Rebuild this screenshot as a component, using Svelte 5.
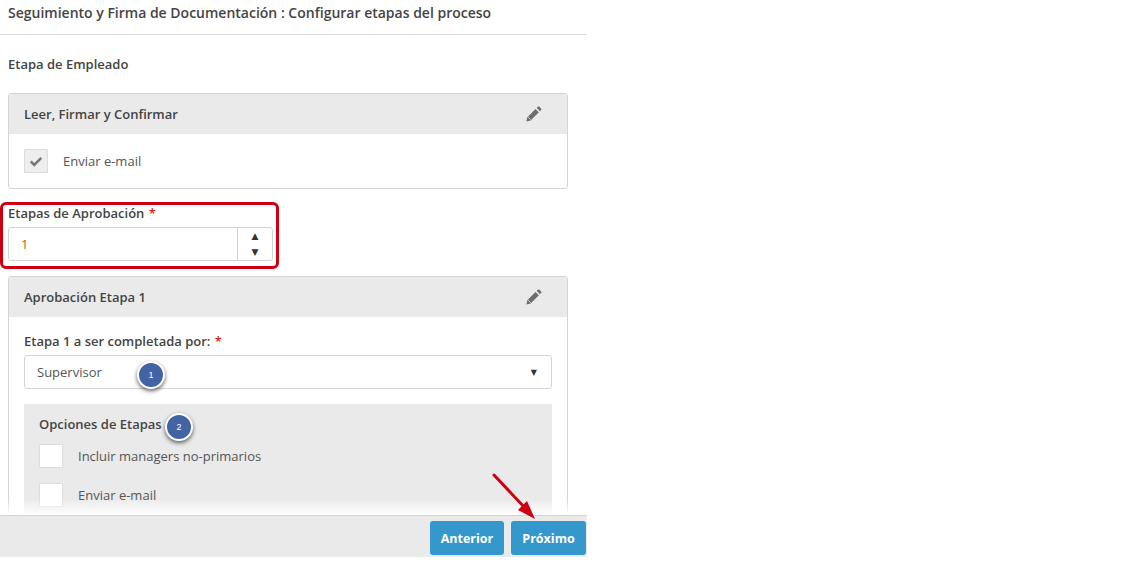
<script lang="ts">
  const pencil = "M4 21 L5.2 15.8 L15 6 L19 10 L9.2 19.8 Z M16.4 4.6 L17.7 3.3 C18.3 2.7 19.1 2.7 19.7 3.3 L21.7 5.3 C22.3 5.9 22.3 6.7 21.7 7.3 L20.4 8.6 Z";
</script>

<div class="wizard">
  <div class="title">Seguimiento y Firma de Documentación : Configurar etapas del proceso</div>

  <div class="content">
    <h4>Etapa de Empleado</h4>

    <section class="panel">
      <header>
        <span>Leer, Firmar y Confirmar</span>
        <svg viewBox="0 0 24 24" width="20" height="20"><path d={pencil} fill="#6e6e6e" /><path d="M6.2 15.8 L9.2 18.8" stroke="#eaeaea" stroke-width="1" /></svg>
      </header>
      <div class="panel-body first">
        <div class="check-row">
          <span class="check disabled">
            <svg viewBox="0 0 16 16" width="14" height="14"><path d="M2 8.5 L6 12.5 L14 4.5" fill="none" stroke="#777" stroke-width="3" /></svg>
          </span>
          <span>Enviar e-mail</span>
        </div>
      </div>
    </section>

    <div class="field steps">
      <label for="steps">Etapas de Aprobación <em>*</em></label>
      <div class="spinner">
        <input id="steps" value="1" />
        <div class="arrows"><span>▲</span><span>▼</span></div>
      </div>
    </div>

    <section class="panel">
      <header>
        <span>Aprobación Etapa 1</span>
        <svg viewBox="0 0 24 24" width="20" height="20"><path d={pencil} fill="#6e6e6e" /><path d="M6.2 15.8 L9.2 18.8" stroke="#eaeaea" stroke-width="1" /></svg>
      </header>
      <div class="panel-body">
        <div class="field">
          <label for="who">Etapa 1 a ser completada por: <em>*</em></label>
          <div class="select" id="who">
            <span>Supervisor</span>
            <span class="caret">▼</span>
          </div>
        </div>
        <div class="options">
          <div class="options-title">Opciones de Etapas</div>
          <div class="check-row"><span class="check"></span><span>Incluir managers no-primarios</span></div>
          <div class="check-row"><span class="check"></span><span>Enviar e-mail</span></div>
        </div>
      </div>
    </section>
    <div class="fade"></div>
  </div>

  <footer>
    <button>Anterior</button>
    <button>Próximo</button>
  </footer>

  <!-- annotations painted on top of the screenshot -->
  <div class="highlight"></div>
  <div class="badge one">1</div>
  <div class="badge two">2</div>
  <svg class="arrow" width="60" height="60" viewBox="0 0 60 60">
    <path d="M3 3 L34 36" stroke="#cc0011" stroke-width="3" stroke-linecap="round" />
    <path d="M44 47 L27 38 L36 29 Z" fill="#cc0011" />
  </svg>
</div>

<style>
  :global(body) {
    background: #fff;
  }

  .wizard {
    position: relative;
    width: 587px;
    height: 557px;
    display: flex;
    flex-direction: column;
    overflow: hidden;
    font-family: "Open Sans", sans-serif;
    font-size: 13px;
    color: #444;
  }

  .title {
    flex: none;
    height: 29px;
    padding: 5px 8px 0;
    border-bottom: 1px solid #ddd;
    font-size: 14px;
    line-height: 16px;
    font-weight: 600;
    color: #444;
  }

  .content {
    position: relative;
    flex: 1;
    min-height: 0;
    overflow: hidden;
    padding: 0 19px 0 8px;
  }

  h4 {
    margin: 21px 0 0;
    font-size: 13px;
    line-height: 16px;
    font-weight: 600;
    color: #444;
  }

  .panel {
    margin-top: 21px;
    border: 1px solid #d4d4d4;
    border-radius: 3px;
  }

  .panel header {
    display: flex;
    align-items: center;
    justify-content: space-between;
    height: 40px;
    padding: 0 24px 0 15px;
    background: #eaeaea;
    font-size: 13px;
    font-weight: 600;
  }

  .panel-body {
    padding: 15px 15px 0;
    height: 400px;
  }

  .panel-body.first {
    height: 39px;
  }

  .check-row {
    display: flex;
    align-items: center;
    gap: 15px;
    height: 24px;
    font-size: 13px;
    color: #555;
  }

  .check {
    display: flex;
    align-items: center;
    justify-content: center;
    width: 24px;
    height: 24px;
    box-sizing: border-box;
    background: #fff;
    border: 1px solid #ddd;
    border-radius: 1px;
  }

  .check.disabled {
    background: #eee;
  }

  .field label {
    display: block;
    font-size: 13px;
    line-height: 16px;
    font-weight: 600;
    color: #444;
  }

  .panel-body .field label {
    padding-top: 1px;
  }

  em {
    font-style: normal;
    margin-left: 1px;
    color: #e02020;
  }

  .steps {
    margin-top: 16px;
    width: 265px;
  }

  .steps + .panel {
    margin-top: 15px;
  }

  .spinner {
    display: flex;
    height: 34px;
    margin-top: 6px;
    box-sizing: border-box;
    border: 1px solid #d4d4d4;
    border-radius: 3px;
  }

  .spinner input {
    flex: 1;
    min-width: 0;
    padding: 0 12px;
    border: 0;
    background: transparent;
    font: inherit;
    font-size: 13px;
    color: #a86c20;
  }

  .arrows {
    width: 34px;
    display: flex;
    flex-direction: column;
    align-items: center;
    justify-content: center;
    gap: 4px;
    border-left: 1px solid #d4d4d4;
    font-family: "DejaVu Sans", sans-serif;
    font-size: 9px;
    line-height: 12px;
    color: #333;
  }

  .select {
    display: flex;
    align-items: center;
    justify-content: space-between;
    box-sizing: border-box;
    height: 34px;
    margin-top: 6px;
    padding: 0 14px 0 12px;
    border: 1px solid #d4d4d4;
    border-radius: 3px;
    font-size: 13px;
    color: #555;
  }

  .caret {
    font-family: "DejaVu Sans", sans-serif;
    font-size: 8px;
    color: #333;
  }

  .options {
    margin-top: 15px;
    padding: 12px 15px;
    background: #eaeaea;
    height: 200px;
  }

  .options-title {
    font-size: 13px;
    line-height: 16px;
    font-weight: 600;
    margin-bottom: 12px;
  }

  .options .check-row + .check-row {
    margin-top: 15px;
  }

  .fade {
    position: absolute;
    left: 0;
    right: 0;
    bottom: 0;
    height: 16px;
    background: linear-gradient(to bottom, rgba(255, 255, 255, 0), #fff);
  }

  footer {
    flex: none;
    display: flex;
    justify-content: flex-end;
    gap: 7px;
    height: 42px;
    box-sizing: border-box;
    padding: 5px 1px 2px 0;
    background: #eaeaea;
    border-top: 1px solid #d4d4d4;
  }

  button {
    width: 74px;
    padding: 0;
    border: 0;
    border-radius: 3px;
    background: #3598cc;
    color: #fff;
    font-family: inherit;
    font-size: 12.5px;
    font-weight: 700;
  }

  button:last-child {
    width: 75px;
  }

  .highlight {
    position: absolute;
    left: 0;
    top: 202px;
    width: 279px;
    height: 67px;
    box-sizing: border-box;
    border: 3px solid #cc0011;
    border-radius: 6px;
  }

  .badge {
    position: absolute;
    width: 28px;
    height: 28px;
    box-sizing: border-box;
    border: 2px solid #fff;
    border-radius: 50%;
    background: #4264a4;
    color: #fff;
    font-family: "Liberation Sans", sans-serif;
    font-size: 9px;
    line-height: 24px;
    text-align: center;
    box-shadow: 0 2px 4px rgba(0, 0, 0, 0.6);
  }

  .badge.one {
    left: 137px;
    top: 361px;
  }

  .badge.two {
    left: 165px;
    top: 413px;
  }

  .arrow {
    position: absolute;
    left: 491px;
    top: 472px;
  }
</style>
